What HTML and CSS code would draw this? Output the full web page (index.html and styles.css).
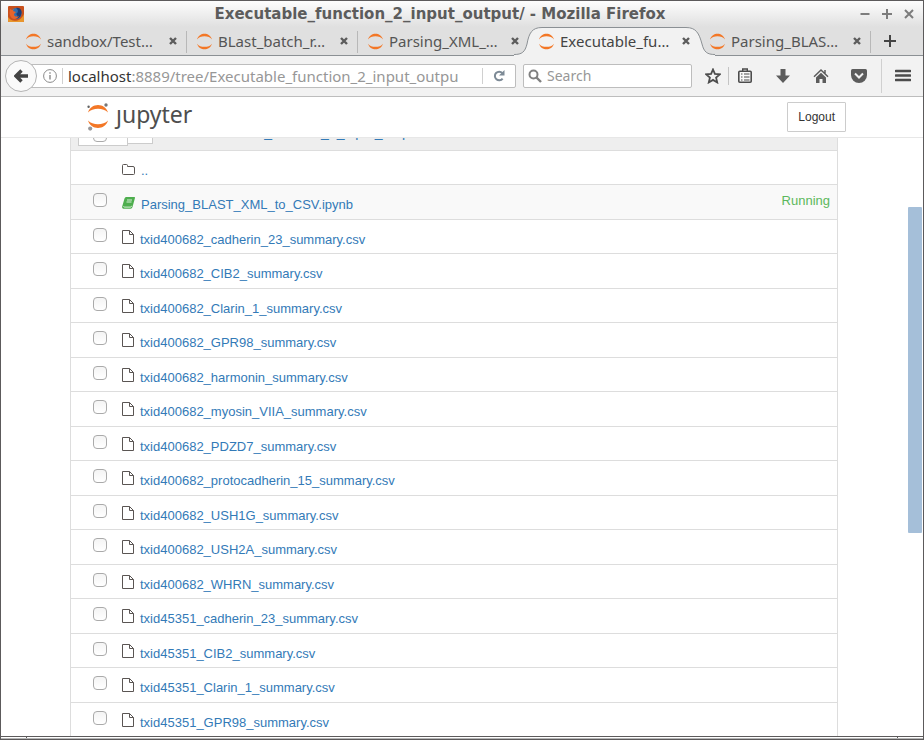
FILE: index.html
```html
<!DOCTYPE html>
<html lang="en">
<head>
<meta charset="utf-8">
<title>Executable_function_2_input_output/</title>
<link rel="stylesheet" href="styles.css">
</head>
<body>
<svg class="defs" aria-hidden="true">
  <symbol id="planet" viewBox="0 0 16 16"><path d="M1 6C2 2.500 5 .700 8 .700S14 2.500 15 6C13.500 3.900 11 3 8 3S2.500 3.900 1 6ZM1 10c1 3.500 4 5.300 7 5.300s6-1.800 7-5.300c-1.500 2.100-4 3-7 3s-5.500-.900-7-3Z" fill="#f37726"/></symbol>
  <symbol id="close" viewBox="0 0 8 8"><path d="M1 1l6 6M7 1L1 7" stroke="#5c5c5c" stroke-width="2.400"/></symbol>
  <symbol id="file" viewBox="0 0 12 14"><path d="M.5.500h7l4 4v9H.5ZM7.500.500v4h4" fill="none" stroke="#5a5553"/></symbol>
</svg>
<div class="window">
  <header class="titlebar">
    <svg class="app-icon" viewBox="0 0 16 16"><rect width="16" height="16" rx="1" fill="#c8501c"/><path d="M0 11C3 16 12 17 16 8v7q0 1-1 1H1q-1 0-1-1Z" fill="#e9962c"/><circle cx="8" cy="7.500" r="5.500" fill="#2f6fae"/><path d="M8 2c4-1 7 3 5 7-1 3-4 4-6 3 3-1 3-3 1-4 2-1 3-4 0-6Z" fill="#1c3f78"/><path d="M2 3l2 1 2-1-1 2 3 1-2 2c0 3 3 3 5 2-2 4-8 4-9-1-1-2 0-4 0-6Z" fill="#e8642a"/></svg>
    <h1 class="title">Executable_function_2_input_output/ - Mozilla Firefox</h1>
    <div class="window-buttons">
      <button aria-label="Minimize"><svg viewBox="0 0 10 10"><path d="M.5 5h9"/></svg></button>
      <button aria-label="Maximize"><svg viewBox="0 0 10 10"><path d="M0 5h10M5 0v10"/></svg></button>
      <button aria-label="Close"><svg viewBox="0 0 10 10"><path d="M1 1l8 8M9 1L1 9"/></svg></button>
    </div>
  </header>
  <nav class="tabs" aria-label="Tabs">
    <div class="tab"><svg class="favicon"><use href="#planet"/></svg><span class="tab-title">sandbox/Test…</span><button class="tab-close" aria-label="Close tab"><svg><use href="#close"/></svg></button></div>
    <div class="tab"><svg class="favicon"><use href="#planet"/></svg><span class="tab-title">BLast_batch_r…</span><button class="tab-close" aria-label="Close tab"><svg><use href="#close"/></svg></button></div>
    <div class="tab before-active"><svg class="favicon"><use href="#planet"/></svg><span class="tab-title">Parsing_XML_…</span><button class="tab-close" aria-label="Close tab"><svg><use href="#close"/></svg></button></div>
    <div class="tab active"><svg class="tab-shape" viewBox="0 0 201 29" preserveAspectRatio="none"><path d="M0 29V27.500C8 27.500 11 25 13 17 15 6 18 .500 28 .500H172C182 .500 185 6 188 17 190 25 193 27.500 201 27.500V29Z" fill="#f2f2f2"/><path d="M0 27.500C8 27.500 11 25 13 17 15 6 18 .500 28 .500H172C182 .500 185 6 188 17 190 25 193 27.500 201 27.500" fill="none" stroke="#8b9094"/></svg><svg class="favicon"><use href="#planet"/></svg><span class="tab-title">Executable_fu…</span><button class="tab-close" aria-label="Close tab"><svg><use href="#close"/></svg></button></div>
    <div class="tab"><svg class="favicon"><use href="#planet"/></svg><span class="tab-title">Parsing_BLAS…</span><button class="tab-close" aria-label="Close tab"><svg><use href="#close"/></svg></button></div>
    <button class="new-tab" aria-label="New tab"><svg viewBox="0 0 12 12"><path d="M0 6h12M6 0v12" stroke="#444" stroke-width="2"/></svg></button>
  </nav>
  <div class="toolbar">
    <button class="back" aria-label="Back"><svg viewBox="0 0 14 14"><path d="M7.500 1.500L2 7l5.500 5.500M2.500 7H14" fill="none" stroke="#444" stroke-width="3.400"/></svg></button>
    <div class="urlbar">
      <svg class="info" viewBox="0 0 14 14"><circle cx="7" cy="7" r="6.400" fill="none" stroke="#8a8a8a"/><path d="M7 6v4.500M7 3.300v1.500" stroke="#8a8a8a" stroke-width="1.400"/></svg>
      <div class="address"><span class="host">localhost</span>:8889/tree/Executable_function_2_input_outpu</div>
      <button class="reload" aria-label="Reload"><svg viewBox="0 0 12 12"><path d="M9.600 8.600A4.300 4.300 0 1 1 9.300 3" fill="none" stroke="#7d8a96" stroke-width="2"/><path d="M11.500 0v5.500H6Z" fill="#7d8a96"/></svg></button>
    </div>
    <div class="search">
      <svg viewBox="0 0 14 14"><circle cx="5.500" cy="5.500" r="4" fill="none" stroke="#808080" stroke-width="2"/><path d="M8.500 8.500l4.500 4.500" stroke="#808080" stroke-width="2.400"/></svg>
      <input type="text" aria-label="Search" placeholder="Search">
    </div>
    <div class="tools">
      <button aria-label="Bookmark"><svg viewBox="0 0 16 16"><path d="M8 1.500l1.900 4.400 4.900.500-3.700 3.200 1.100 4.800L8 11.900l-4.200 2.500 1.100-4.800L1.200 6.400l4.900-.5Z" fill="none" stroke="#4c4c4c" stroke-width="1.800"/></svg></button>
      <button aria-label="Bookmarks list" class="list-tool"><svg viewBox="0 0 16 16"><path d="M5.700 3V1h4.600v2" fill="none" stroke="#4c4c4c" stroke-width="1.400"/><rect x="1.800" y="3.300" width="12.400" height="11" rx="1" fill="#fafafa" stroke="#4c4c4c" stroke-width="1.600"/><path d="M4 6h1.500M7 6h5.500M4 9h1.500M7 9h5.500M4 12h1.500M7 12h5.500" stroke="#4c4c4c" stroke-width="1.200"/></svg></button>
      <button aria-label="Downloads"><svg viewBox="0 0 16 16"><path d="M5.500 1h5v6.500H15L8 15 1 7.500h4.500Z" fill="#5c5c5c"/></svg></button>
      <button aria-label="Home"><svg viewBox="0 0 16 16"><path d="M1 8.700L8 2l7 6.700M12 2v4" fill="none" stroke="#5c5c5c" stroke-width="1.500"/><path d="M3 9.500l5-4.700 5 4.700V15H9.500v-4h-3v4H3Z" fill="#5c5c5c"/></svg></button>
      <button aria-label="Pocket"><svg viewBox="0 0 16 16"><path d="M1.500 1h13Q16 1 16 2.500V7A8 8 0 0 1 0 7V2.500Q0 1 1.500 1Z" fill="#5c5c5c"/><path d="M4 5.500l4 4 4-4" fill="none" stroke="#f2f2f2" stroke-width="2"/></svg></button>
      <button aria-label="Menu" class="menu-tool"><svg viewBox="0 0 16 16"><path d="M1 3h14M1 7.500h14M1 12h14" stroke="#4c4c4c" stroke-width="2.600" stroke-linecap="round"/></svg></button>
    </div>
  </div>
  <div class="page">
    <header class="site-header">
      <div class="site-inner">
        <a class="brand" href="#" aria-label="jupyter"><svg viewBox="0 0 24 28"><path d="M2 9.500C3.500 4.700 7.500 2 12 2s8.500 2.700 10 7.500C19.500 6.900 16 5.700 12 5.700S4.500 6.900 2 9.500ZM2 17.500c1.500 4.800 5.500 7.500 10 7.500s8.500-2.700 10-7.500c-2.500 2.600-6 3.800-10 3.800s-7.500-1.200-10-3.800Z" fill="#f37726"/><circle cx="20" cy="2" r="1.700" fill="#767677"/><circle cx="2.600" cy="3.800" r="1.200" fill="#616262"/><circle cx="4.200" cy="25.600" r="2.100" fill="#989798"/></svg><span class="brand-name">ȷupyter</span></a>
        <button class="logout">Logout</button>
      </div>
    </header>
    <div class="viewport">
      <main class="files">
        <div class="files-head">
          <div class="select-group"><label class="select-all"><input type="checkbox" aria-label="Select all"></label><button class="caret" aria-label="Select menu"></button></div>
          <a class="crumb" href="#">Executable_function_2_input_output</a>
        </div>
        <ul class="rows">
          <li class="row up"><span class="blank"></span><svg class="folder" viewBox="0 0 13 12"><path d="M.5 9.500v-8Q.5.500 1.500.500h3q1 0 1 1v1h5.500q1.500 0 1.500 1.500v5.500q0 1-1 1h-10q-1 0-1-1Z" fill="none" stroke="#5a5553"/></svg><a href="#">..</a></li>
          <li class="row notebook"><input type="checkbox" aria-label="Parsing_BLAST_XML_to_CSV.ipynb"><svg class="book" viewBox="0 0 13 12"><path d="M4 0h8.500q.7.300.4 1.200L10.500 10q-.4 1.700-2 1.700H1.500Q-.3 11.500.2 9.500L2.500 1.500Q3 0 4 0Z" fill="#4eae4e"/><path d="M5 3h5M4.500 5h5M1.500 9.300q.200.800 1 .8h6q.8 0 1.200-1.300" fill="none" stroke="#e9f7e9" stroke-width=".9"/></svg><a href="#">Parsing_BLAST_XML_to_CSV.ipynb</a><span class="status">Running</span></li>
          <li class="row"><input type="checkbox" aria-label="txid400682_cadherin_23_summary.csv"><svg class="file"><use href="#file"/></svg><a href="#">txid400682_cadherin_23_summary.csv</a></li>
          <li class="row"><input type="checkbox" aria-label="txid400682_CIB2_summary.csv"><svg class="file"><use href="#file"/></svg><a href="#">txid400682_CIB2_summary.csv</a></li>
          <li class="row"><input type="checkbox" aria-label="txid400682_Clarin_1_summary.csv"><svg class="file"><use href="#file"/></svg><a href="#">txid400682_Clarin_1_summary.csv</a></li>
          <li class="row"><input type="checkbox" aria-label="txid400682_GPR98_summary.csv"><svg class="file"><use href="#file"/></svg><a href="#">txid400682_GPR98_summary.csv</a></li>
          <li class="row"><input type="checkbox" aria-label="txid400682_harmonin_summary.csv"><svg class="file"><use href="#file"/></svg><a href="#">txid400682_harmonin_summary.csv</a></li>
          <li class="row"><input type="checkbox" aria-label="txid400682_myosin_VIIA_summary.csv"><svg class="file"><use href="#file"/></svg><a href="#">txid400682_myosin_VIIA_summary.csv</a></li>
          <li class="row"><input type="checkbox" aria-label="txid400682_PDZD7_summary.csv"><svg class="file"><use href="#file"/></svg><a href="#">txid400682_PDZD7_summary.csv</a></li>
          <li class="row"><input type="checkbox" aria-label="txid400682_protocadherin_15_summary.csv"><svg class="file"><use href="#file"/></svg><a href="#">txid400682_protocadherin_15_summary.csv</a></li>
          <li class="row"><input type="checkbox" aria-label="txid400682_USH1G_summary.csv"><svg class="file"><use href="#file"/></svg><a href="#">txid400682_USH1G_summary.csv</a></li>
          <li class="row"><input type="checkbox" aria-label="txid400682_USH2A_summary.csv"><svg class="file"><use href="#file"/></svg><a href="#">txid400682_USH2A_summary.csv</a></li>
          <li class="row"><input type="checkbox" aria-label="txid400682_WHRN_summary.csv"><svg class="file"><use href="#file"/></svg><a href="#">txid400682_WHRN_summary.csv</a></li>
          <li class="row"><input type="checkbox" aria-label="txid45351_cadherin_23_summary.csv"><svg class="file"><use href="#file"/></svg><a href="#">txid45351_cadherin_23_summary.csv</a></li>
          <li class="row"><input type="checkbox" aria-label="txid45351_CIB2_summary.csv"><svg class="file"><use href="#file"/></svg><a href="#">txid45351_CIB2_summary.csv</a></li>
          <li class="row"><input type="checkbox" aria-label="txid45351_Clarin_1_summary.csv"><svg class="file"><use href="#file"/></svg><a href="#">txid45351_Clarin_1_summary.csv</a></li>
          <li class="row"><input type="checkbox" aria-label="txid45351_GPR98_summary.csv"><svg class="file"><use href="#file"/></svg><a href="#">txid45351_GPR98_summary.csv</a></li>
        </ul>
      </main>
      <div class="scrollbar"><div class="thumb"></div></div>
    </div>
  </div>
  <div class="resize-edge"></div>
</div>
</body>
</html>
```
FILE: styles.css
```css
* { box-sizing: border-box; }
body { margin: 0; font-family: "Liberation Sans", Arial, sans-serif; font-size: 13px; }
button { padding: 0; border: 0; background: none; font: inherit; color: inherit; }
svg { display: block; flex: none; }
.defs { position: absolute; width: 0; height: 0; }

.window { display: flex; flex-direction: column; height: 100vh; overflow: hidden; border: 1px solid #5c5a5b; background: #fff; }

.titlebar { display: flex; align-items: center; height: 26px; flex: none; padding: 0 9px 0 7px; background: linear-gradient(#fdfdfd, #e0e0e0); }
.app-icon { width: 16px; height: 16px; }
.title { flex: 1; margin: 0; padding-right: 4px; text-align: center; font: bold 15px/24px "DejaVu Sans", sans-serif; color: #5c5c5c; }
.window-buttons { display: flex; gap: 12px; }
.window-buttons svg { width: 10px; height: 10px; fill: none; stroke: #7c7c7c; stroke-width: 2; }

.tabs { display: flex; height: 29px; flex: none; padding: 0 8px 0 15px; background: #e0e0e0; border-bottom: 1px solid #8b9094; font: 15px/22px "Noto Sans", sans-serif; color: #555; }
.tab { position: relative; display: flex; align-items: center; flex: 0 1 171px; min-width: 0; padding: 0 10px 0 9px; }
.tab::after { content: ""; position: absolute; right: 0; top: 4px; width: 1px; height: 22px; background: #b8b8b8; }
.tab.before-active::after, .tab.active::after { display: none; }
.favicon { position: relative; width: 17px; height: 17px; }
.tab-title { position: relative; flex: 1; min-width: 0; margin-left: 5px; white-space: nowrap; }
.tab-close, .tab-close svg { position: relative; width: 8px; height: 8px; }
.tab.active { z-index: 1; color: #444; }
.tab-shape { position: absolute; left: -15px; top: 0; width: 201px; height: 29px; }
.new-tab { margin-left: 13px; }
.new-tab svg { width: 12px; height: 12px; }

.toolbar { display: flex; align-items: center; height: 41px; flex: none; padding-left: 4px; background: #f2f2f2; border-bottom: 1px solid #bdbdbd; font: 15px/22px "Noto Sans", sans-serif; color: #979797; }
.back { position: relative; display: grid; place-items: center; flex: none; width: 32px; height: 32px; border: 1px solid #b4b4b4; border-radius: 50%; background: #fafafa; }
.back svg { width: 14px; height: 14px; }
.urlbar { display: flex; align-items: center; flex: 1; min-width: 0; height: 24px; margin-left: -8px; padding-left: 13px; border: 1px solid #bdbdbd; border-radius: 2px; background: #fff; }
.info { width: 14px; height: 14px; }
.address { flex: 1; min-width: 0; margin-left: 5px; padding-left: 6px; background: linear-gradient(#d0d0d0, #d0d0d0) 0 3px / 1px 16px no-repeat; white-space: nowrap; }
.host { color: #333; }
.reload { display: grid; place-items: center; width: 33px; height: 16px; border-left: 1px solid #d0d0d0; }
.reload svg { width: 12px; height: 12px; }
.search { display: flex; align-items: center; width: 169px; height: 24px; margin-left: 7px; padding-left: 4px; border: 1px solid #bdbdbd; border-radius: 2px; background: #fff; font-size: 14px; }
.search svg { width: 14px; height: 14px; }
.search input { flex: 1; min-width: 0; margin: 0; padding: 0 0 0 5px; border: 0; background: none; font: inherit; color: #979797; outline: 0; }
.search input::placeholder { color: #979797; }
.tools { display: flex; align-items: center; height: 40px; padding-left: 6px; }
.tools button { display: grid; place-items: center; width: 38px; height: 18px; }
.tools button:first-child { width: 30px; }
.tools svg { width: 16px; height: 16px; }
.tools .list-tool { width: 33px; margin-right: 3px; border-left: 1px solid #c4c4c4; }
.tools .menu-tool { width: 42px; height: 34px; margin-left: 3px; border-left: 1px solid #d0d0d0; }

.page { display: flex; flex-direction: column; flex: 1; min-height: 0; }
.site-header { flex: none; height: 41px; border-bottom: 1px solid #e7e7e7; }
.site-inner { display: flex; align-items: center; justify-content: space-between; max-width: 768px; height: 40px; margin: 0 auto; }
.brand { display: flex; align-items: center; margin-left: 8px; color: #4e4e4e; text-decoration: none; }
.brand svg { width: 24px; height: 28px; }
.brand-name { margin-left: 6px; padding-bottom: 6px; font: 23px/30px "Noto Sans", sans-serif; }
.logout { height: 30px; padding: 0 10px; border: 1px solid #ccc; border-radius: 1px; background: #fff; font-size: 12px; color: #333; }

.viewport { display: flex; flex: 1; min-height: 0; overflow: hidden; }
.files { flex: 1; max-width: 768px; min-width: 0; margin: -21px auto 0; border: 1px solid #ddd; align-self: flex-start; }
.files-head { display: flex; height: 33px; padding: 0 7px; background: #eee; border-bottom: 1px solid #ddd; }
.select-group { display: flex; align-items: flex-start; width: 117px; }
.select-all { display: flex; width: 50px; height: 28px; padding: 9px 0 0 14px; border: 1px solid #ccc; background: #fff; }
.caret { width: 25px; height: 26px; border: 1px solid #ccc; border-left: 0; background: #fff; }
.crumb { font-size: 14px; line-height: 28px; color: #337ab7; text-decoration: none; }

.rows { margin: 0; padding: 0; list-style: none; }
.row { display: flex; align-items: flex-start; height: 35px; padding: 8px 7px 0 22px; border-bottom: 1px solid #ddd; line-height: 16px; }
.row:nth-child(odd) { height: 34px; }
.row a { margin: 4px 0 0 6px; color: #337ab7; text-decoration: none; }
input[type="checkbox"] { appearance: none; flex: none; width: 14px; height: 14px; margin: 0; border: 1px solid #aaa; border-radius: 4px; background: linear-gradient(#f4f4f4, #fff); }
.blank { width: 14px; }
.file { width: 12px; height: 14px; margin: 2px 0 0 15px; }
.folder { width: 13px; height: 12px; margin: 5px 0 0 15px; }
.book { width: 13px; height: 12px; margin: 4px 0 0 15px; }
.notebook { background: #f9f9f9; }
.status { margin-left: auto; color: #5cb85c; }

.scrollbar { flex: none; width: 16px; padding: 69px 1px 0 1px; }
.thumb { height: 326px; border-radius: 1px; background: #a5bfd9; }

.resize-edge { flex: none; height: 3px; border-top: 1px solid #5c5a5b; border-bottom: 1px solid #b5b5b5; background: linear-gradient(#5c5a5b, #5c5a5b) 25px 0 / 1px 100% no-repeat, linear-gradient(#5c5a5b, #5c5a5b) right 25px top 0 / 1px 100% no-repeat, #fff; }
```
